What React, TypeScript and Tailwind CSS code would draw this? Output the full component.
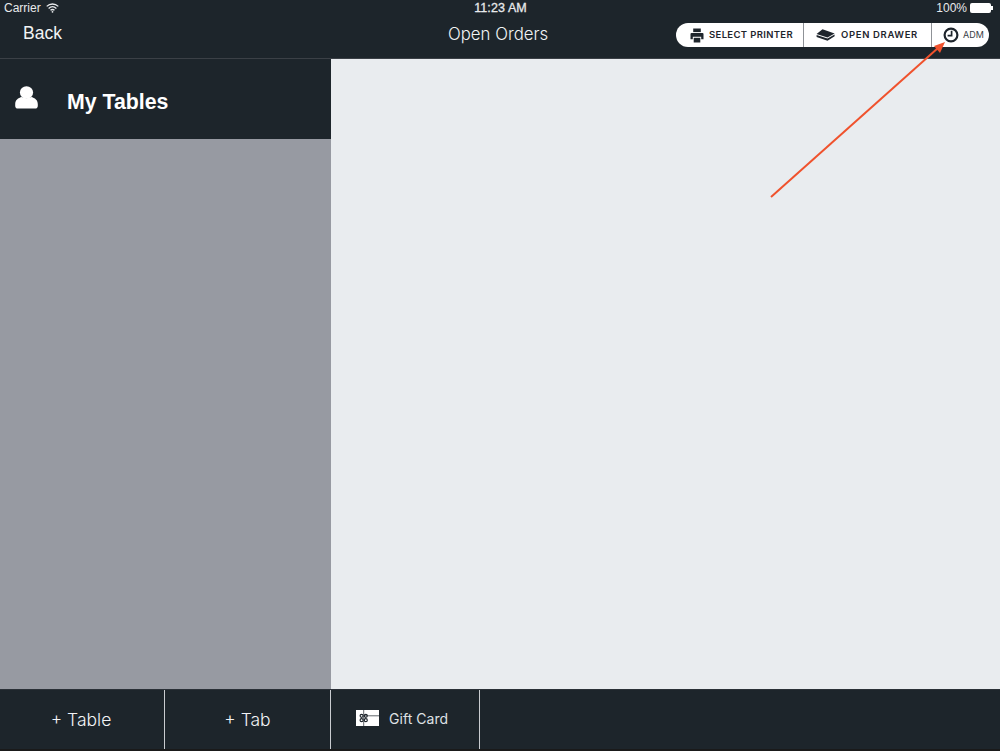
import React from 'react';

const sans = "font-['Liberation_Sans',Arial,sans-serif]";
const gotham = "font-['Inter','Noto_Sans',sans-serif]";

const WifiIcon = () => (
  <svg width="13" height="10" viewBox="0 0 13 10" fill="none" stroke="#e8eaec" strokeWidth="1.3">
    <path d="M0.7 3.4C4 0.2 9 0.2 12.3 3.4" />
    <path d="M2.6 5.4C4.9 3.3 8.1 3.3 10.4 5.4" />
    <path d="M4.5 7.3C5.7 6.3 7.3 6.3 8.5 7.3" />
    <circle cx="6.5" cy="8.8" r="0.9" fill="#e8eaec" stroke="none" />
  </svg>
);

const PrinterIcon = () => (
  <svg width="14" height="15" viewBox="0 0 14 15" fill="#1e252c">
    <path d="M3.2 0.5h7.6v3.6H3.2z" />
    <path d="M1.5 5h11a1 1 0 0 1 1 1v5.2h-2.3V8.8H2.8v2.4H0.5V6a1 1 0 0 1 1-1z" />
    <path d="M3.7 9.8h6.6v4.7H3.7z" />
  </svg>
);

const DrawerIcon = () => (
  <svg width="19" height="12" viewBox="0 0 19 12" fill="#1e252c">
    <path d="M6.5 0.3L18.6 4.4L11.5 8.4L0.6 5z" />
    <path d="M0.6 6L11.5 9.4L18.6 5.4V7.2L11.5 11.7L0.6 8z" />
  </svg>
);

const ClockIcon = () => (
  <svg width="16" height="16" viewBox="0 0 16 16" fill="none" stroke="#1e252c">
    <circle cx="8" cy="8" r="6.4" strokeWidth="2.2" />
    <path d="M8.6 3.8V8.6H4.6" strokeWidth="1.7" />
  </svg>
);

const UserIcon = () => (
  <svg width="23" height="23" viewBox="0 0 23 23" fill="white">
    <ellipse cx="11.5" cy="6.5" rx="6.6" ry="6.3" />
    <path d="M7 11C8.2 12.6 14.8 12.6 16 11C20 11.8 22.8 14.2 22.8 18.2V20C22.8 21.6 21.6 22.6 20 22.6H3C1.4 22.6 0.2 21.6 0.2 20V18.2C0.2 14.2 3 11.8 7 11z" />
  </svg>
);

const GiftIcon = () => (
  <svg width="23" height="16" viewBox="0 0 23 16">
    <rect width="23" height="16" fill="white" />
    <path d="M8 5.8H23" stroke="#1e252c" strokeWidth="0.7" />
    <path d="M7.7 0V16" stroke="#1e252c" strokeWidth="0.7" />
    <circle cx="5.6" cy="5.8" r="1.5" fill="none" stroke="#1e252c" strokeWidth="1.2" />
    <circle cx="9.8" cy="5.8" r="1.5" fill="none" stroke="#1e252c" strokeWidth="1.2" />
    <circle cx="5.6" cy="10.2" r="1.5" fill="none" stroke="#1e252c" strokeWidth="1.2" />
    <circle cx="9.8" cy="10.2" r="1.5" fill="none" stroke="#1e252c" strokeWidth="1.2" />
  </svg>
);

const BottomButton = ({ label, className }: { label: string; className: string }) => (
  <div className={`flex items-center justify-center border-r border-[#c9ccd0] pt-[1px] text-[17.5px] font-light text-[#f2f3f5] ${gotham} ${className}`}>
    {label}
  </div>
);

const App = () => (
  <div className={`relative flex h-[751px] w-[1000px] flex-col overflow-hidden bg-[#1d252b] ${sans}`}>
    <header className="flex h-[59px] flex-none flex-col border-b border-[#3b4046] bg-[#1d252b]">
      <div className="flex h-[16px] flex-none items-center justify-between pl-[4px] pr-[7px] text-[12px] text-[#e8eaec]">
        <div className="flex w-[200px] items-center gap-[5px]">
          <span>Carrier</span>
          <WifiIcon />
        </div>
        <span className="text-[12.5px] tracking-[0.1px] [-webkit-text-stroke:0.3px_#e8eaec]">11:23 AM</span>
        <div className="flex w-[196px] items-center justify-end">
          <span className="mr-[3px]">100%</span>
          <div className="h-[10px] w-[21px] rounded-[2px] bg-white" />
          <div className="h-[4px] w-[2px] bg-white" />
        </div>
      </div>
      <div className="relative flex flex-1 items-start justify-between pl-[23px] pr-[11px]">
        <span className="mt-[4px] text-[17.5px] text-[#f2f3f4]">Back</span>
        <span className={`absolute left-[448px] top-[6px] text-[16.8px] font-light text-[#f2f3f5] ${gotham}`}>Open Orders</span>
        <div className={`mt-[7px] flex h-[24px] items-stretch rounded-full bg-white text-[#1e252c] ${gotham}`}>
          <div className="flex w-[128px] items-center gap-[5px] border-r border-[#8f9297] pl-[14px] text-[9.5px] font-semibold tracking-[0.35px]">
            <PrinterIcon />
            <span>SELECT PRINTER</span>
          </div>
          <div className="flex w-[128px] items-center gap-[6px] border-r border-[#8f9297] pl-[12px] text-[9.5px] font-semibold tracking-[0.65px]">
            <DrawerIcon />
            <span>OPEN DRAWER</span>
          </div>
          <div className="flex w-[57px] items-center gap-[4px] pl-[11px] text-[9px] text-[#3a4046]">
            <ClockIcon />
            <span>ADM</span>
          </div>
        </div>
      </div>
    </header>

    <main className="flex min-h-0 flex-1">
      <aside className="flex w-[331px] flex-none flex-col">
        <div className="flex h-[80px] flex-none items-center bg-[#1d252b] pl-[15px]">
          <div className="mb-[3px]">
            <UserIcon />
          </div>
          <span className="ml-[29px] mt-[8px] text-[21.3px] font-bold text-white">My Tables</span>
        </div>
        <div className="flex-1 bg-[#979aa2]" />
      </aside>
      <section className="flex-1 bg-[#e9ecef]" />
    </main>

    <footer className="flex h-[60px] flex-none border-t border-[#2a3037] bg-[#1d252b]">
      <BottomButton label="+ Table" className="w-[165px] pr-[2px]" />
      <BottomButton label="+ Tab" className="w-[166px]" />
      <div className={`flex w-[149px] items-center border-r border-[#c9ccd0] pb-[3px] pl-[25px] text-[14px] tracking-[0.05px] text-[#dfe1e4] ${gotham}`}>
        <GiftIcon />
        <span className="ml-[10px]">Gift Card</span>
      </div>
    </footer>
    <div className="h-[2px] flex-none bg-[#1a1a1a]" />

    {/* annotation arrow over the screenshot */}
    <svg className="absolute left-0 top-0" width="1000" height="751" fill="none">
      <path d="M771 197L938 48" stroke="#f0522d" strokeWidth="2" />
      <path d="M945 42L934 46L940 53z" fill="#f0522d" />
    </svg>
  </div>
);

export default App;
